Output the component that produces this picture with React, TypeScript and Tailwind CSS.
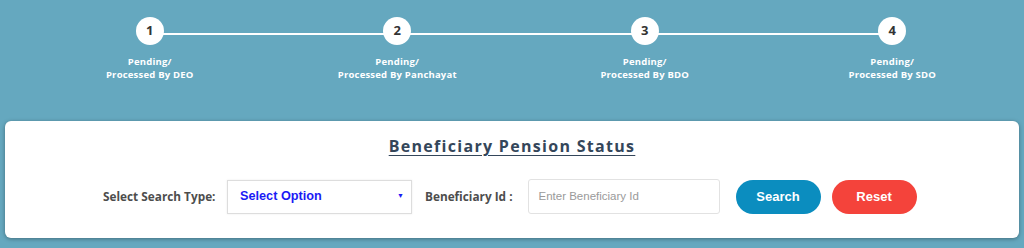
const steps = [
  { n: 1, label: 'Processed By DEO' },
  { n: 2, label: 'Processed By Panchayat' },
  { n: 3, label: 'Processed By BDO' },
  { n: 4, label: 'Processed By SDO' },
];

function Stepper() {
  return (
    <div className="ml-[26px] grid w-[990px] grid-cols-4 pt-[17px]">
      {steps.map((s, i) => (
        <div key={s.n} className="relative flex flex-col items-center">
          {/* connector line halves */}
          {i > 0 && <div className="absolute left-0 right-1/2 top-[16px] h-[2px] bg-white" />}
          {i < steps.length - 1 && <div className="absolute left-1/2 right-0 top-[16px] h-[2px] bg-white" />}
          <div className="relative z-10 flex h-[28px] w-[28px] items-center justify-center rounded-full bg-white text-[13px] font-bold text-[#333]">
            {s.n}
          </div>
          <div className="mt-[10px] text-center text-[9.5px] font-bold leading-[13px] tracking-[0.2px] text-white">
            <div>Pending/</div>
            <div>{s.label}</div>
          </div>
        </div>
      ))}
    </div>
  );
}

export default function App() {
  return (
    <div
      className="h-[248px] w-[1024px] overflow-hidden bg-[#65a8bf]"
      style={{ fontFamily: '"Open Sans", "Noto Sans", sans-serif' }}
    >
      <div className="h-[121px]">
        <Stepper />
      </div>

      <div className="mx-[5px] h-[117px] rounded-[6px] bg-white pt-[13px] shadow-[0_1px_4px_rgba(0,0,0,0.35)]">
        <h2 className="text-center text-[16px] font-bold leading-[24px] tracking-[1.3px] text-[#34465a] underline underline-offset-[3px]">
          Beneficiary Pension Status
        </h2>

        <div className="mt-[21px] flex items-center pl-[98px]">
          <label className="w-[114px] text-[11.8px] font-bold text-[#4d4d4d]">Select Search Type:</label>
          <div
            className="ml-[10px] flex h-[34px] w-[185px] items-center justify-between border border-[#ddd] pl-[12px] pr-[7px] shadow-[0_0_2px_rgba(0,0,0,0.08)]"
            style={{ fontFamily: '"Liberation Sans", Arial, sans-serif' }}
          >
            <span className="text-[12.7px] font-bold text-[#1b1bf5]">Select Option</span>
            <span className="text-[7px] text-[#1b1bf5]">▼</span>
          </div>
          <label className="ml-[13px] text-[11.8px] font-bold text-[#4d4d4d]">Beneficiary Id :</label>
          <div
            className="ml-[15px] flex h-[35px] w-[192px] items-center rounded-[3px] border border-[#e2e2e2] pl-[10px]"
            style={{ fontFamily: '"Liberation Sans", Arial, sans-serif' }}
          >
            <span className="text-[11.5px] text-[#9a9a9a]">Enter Beneficiary Id</span>
          </div>
          <button
            className="ml-[16px] h-[34px] w-[85px] rounded-full bg-[#0b8dbf] text-[13px] font-bold text-white"
            style={{ fontFamily: '"Liberation Sans", Arial, sans-serif' }}
          >
            Search
          </button>
          <button
            className="ml-[11px] h-[34px] w-[85px] rounded-full bg-[#f4433b] text-[13px] font-bold text-white"
            style={{ fontFamily: '"Liberation Sans", Arial, sans-serif' }}
          >
            Reset
          </button>
        </div>
      </div>
    </div>
  );
}
